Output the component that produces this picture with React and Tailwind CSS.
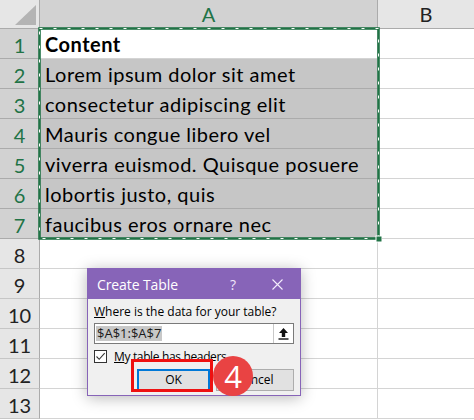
import React from 'react';

const cells = [
  { text: 'Content', bold: true },
  { text: 'Lorem ipsum dolor sit amet' },
  { text: 'consectetur adipiscing elit' },
  { text: 'Mauris congue libero vel' },
  { text: 'viverra euismod. Quisque posuere' },
  { text: 'lobortis justo, quis' },
  { text: 'faucibus eros ornare nec' },
  {}, {}, {}, {}, {}, {},
];

const cellFont = { fontFamily: 'Lato, "Noto Sans", sans-serif' };

function Row({ n, cell }) {
  const selected = n <= 7;
  const shaded = n >= 2 && n <= 7;
  return (
    <div className="flex h-[30px]">
      <div
        className={`w-[40px] shrink-0 flex items-end justify-center pb-[3px] text-[20px] leading-none border-r border-b ${
          selected
            ? 'bg-[#d2d2d2] text-[#217346] border-r-[#ababab] border-b-[#ababab]'
            : 'bg-[#e6e6e6] text-[#222] border-r-[#ababab] border-b-[#c6c6c6]'
        }`}
      >
        {n}
      </div>
      <div
        className={`w-[338px] shrink-0 flex items-end pl-[5px] pb-[4px] text-[20px] leading-none tracking-[0.5px] text-black border-r border-r-[#d4d4d4] border-b ${
          shaded ? 'bg-[#c6c6c6] border-b-[#ababab]' : 'bg-white border-b-[#d4d4d4]'
        } ${cell.bold ? 'font-bold' : ''}`}
      >
        {cell.text}
      </div>
      <div className="flex-1 bg-white border-b border-b-[#d4d4d4]" />
    </div>
  );
}

function Dialog() {
  return (
    <div
      className="absolute left-[87px] top-[268px] w-[214px] h-[128px] border border-[#8764b8] bg-[#f0f0f0] shadow-[0_2px_14px_rgba(0,0,0,0.28)] flex flex-col text-[12px] text-black"
      style={{ fontFamily: '"Open Sans", "Noto Sans", sans-serif' }}
    >
      <div className="h-[30px] bg-[#8764b8] flex items-center pl-[9px] pr-[17px] text-white">
        <span className="text-[14px] tracking-[-0.1px]">Create Table</span>
        <span className="ml-auto mr-[36px] text-[14px] text-[#f0e8fa]">?</span>
        <svg width="11" height="11" viewBox="0 0 11 11">
          <path d="M0.5 0.5L10.5 10.5M10.5 0.5L0.5 10.5" stroke="#f4eefc" strokeWidth="1.1" />
        </svg>
      </div>
      <div className="flex flex-col px-[6px] pt-[5px]">
        <div className="leading-[16px]">
          <span className="underline">W</span>here is the data for your table?
        </div>
        <div className="mt-[3px] h-[21px] flex border border-[#7a7a7a] bg-white">
          <div className="flex-1 flex items-center pl-[1px]">
            <span className="bg-[#c8c8c8] text-[#1a1a1a] px-[1px] text-[13px] leading-[15px]">$A$1:$A$7</span>
          </div>
          <div className="w-[20px] border-l border-[#c8c8c8] flex items-center justify-center">
            <svg width="11" height="13" viewBox="0 0 11 13">
              <path d="M5.5 1L1 6h2.8v4h3.4V6H10z" fill="#111" />
              <rect x="0.5" y="11.3" width="10" height="1.4" fill="#111" />
            </svg>
          </div>
        </div>
        <div className="mt-[5px] flex items-center">
          <div className="w-[13px] h-[13px] border border-[#333] bg-white flex items-center justify-center">
            <svg width="11" height="11" viewBox="0 0 11 11">
              <path d="M1.5 5.5L4.2 8.3L9.7 2.2" stroke="#333" strokeWidth="1.1" fill="none" />
            </svg>
          </div>
          <span className="ml-[7px] leading-[15px] tracking-[-0.35px]">
            <span className="underline">M</span>y table has headers
          </span>
        </div>
        <div className="mt-[5px] flex items-center">
          <div className="ml-[43px] w-[73px] h-[22px] border-2 border-[#0078d7] bg-[#e1e1e1] flex items-center justify-center">
            OK
          </div>
          <div className="ml-[6px] flex-1 h-[22px] border border-[#adadad] bg-[#e1e1e1] flex items-center justify-center">
            Cancel
          </div>
        </div>
      </div>
    </div>
  );
}

export default function App() {
  return (
    <div className="relative w-[474px] h-[420px] overflow-hidden bg-white" style={cellFont}>
      <div className="flex h-[29px]">
        <div className="w-[40px] shrink-0 bg-[#e6e6e6] border-r border-b border-[#ababab] flex">
          <svg width="39" height="28" viewBox="0 0 39 28">
            <polygon points="15,25 36,25 36,5" fill="#b4b4b4" />
          </svg>
        </div>
        <div className="w-[338px] shrink-0 bg-[#d2d2d2] border-r border-r-[#ababab] border-b border-b-[#217346] flex items-end justify-center pb-[4px] text-[20px] leading-none text-[#217346]">
          A
        </div>
        <div className="flex-1 bg-[#e6e6e6] border-b border-[#ababab] flex items-end justify-center pb-[4px] text-[20px] leading-none text-[#222]">
          B
        </div>
      </div>
      {cells.map((cell, i) => (
        <Row key={i} n={i + 1} cell={cell} />
      ))}

      {/* marching ants around A1:A7 */}
      <svg className="absolute left-[37px] top-[26px]" width="345" height="217" viewBox="0 0 345 217">
        <rect x="2.5" y="2.5" width="339" height="210" fill="none" stroke="#217346" strokeWidth="2.6" />
        <rect x="2.5" y="2.5" width="339" height="210" fill="none" stroke="#fff" strokeWidth="1" strokeDasharray="3 11" />
        <rect x="339" y="210" width="6" height="6" fill="#217346" stroke="#fff" strokeWidth="1" />
      </svg>

      <Dialog />

      {/* callout highlight */}
      <div className="absolute left-[131px] top-[359px] w-[82px] h-[33px] border-[3px] border-[#ee1111]" />
      <div className="absolute left-[213px] top-[356px] w-[40px] h-[40px] rounded-full bg-[#e94343] flex items-center justify-center text-white text-[31px] leading-none pt-[1px]" style={{ fontFamily: '"Open Sans", sans-serif' }}>
        4
      </div>
    </div>
  );
}
